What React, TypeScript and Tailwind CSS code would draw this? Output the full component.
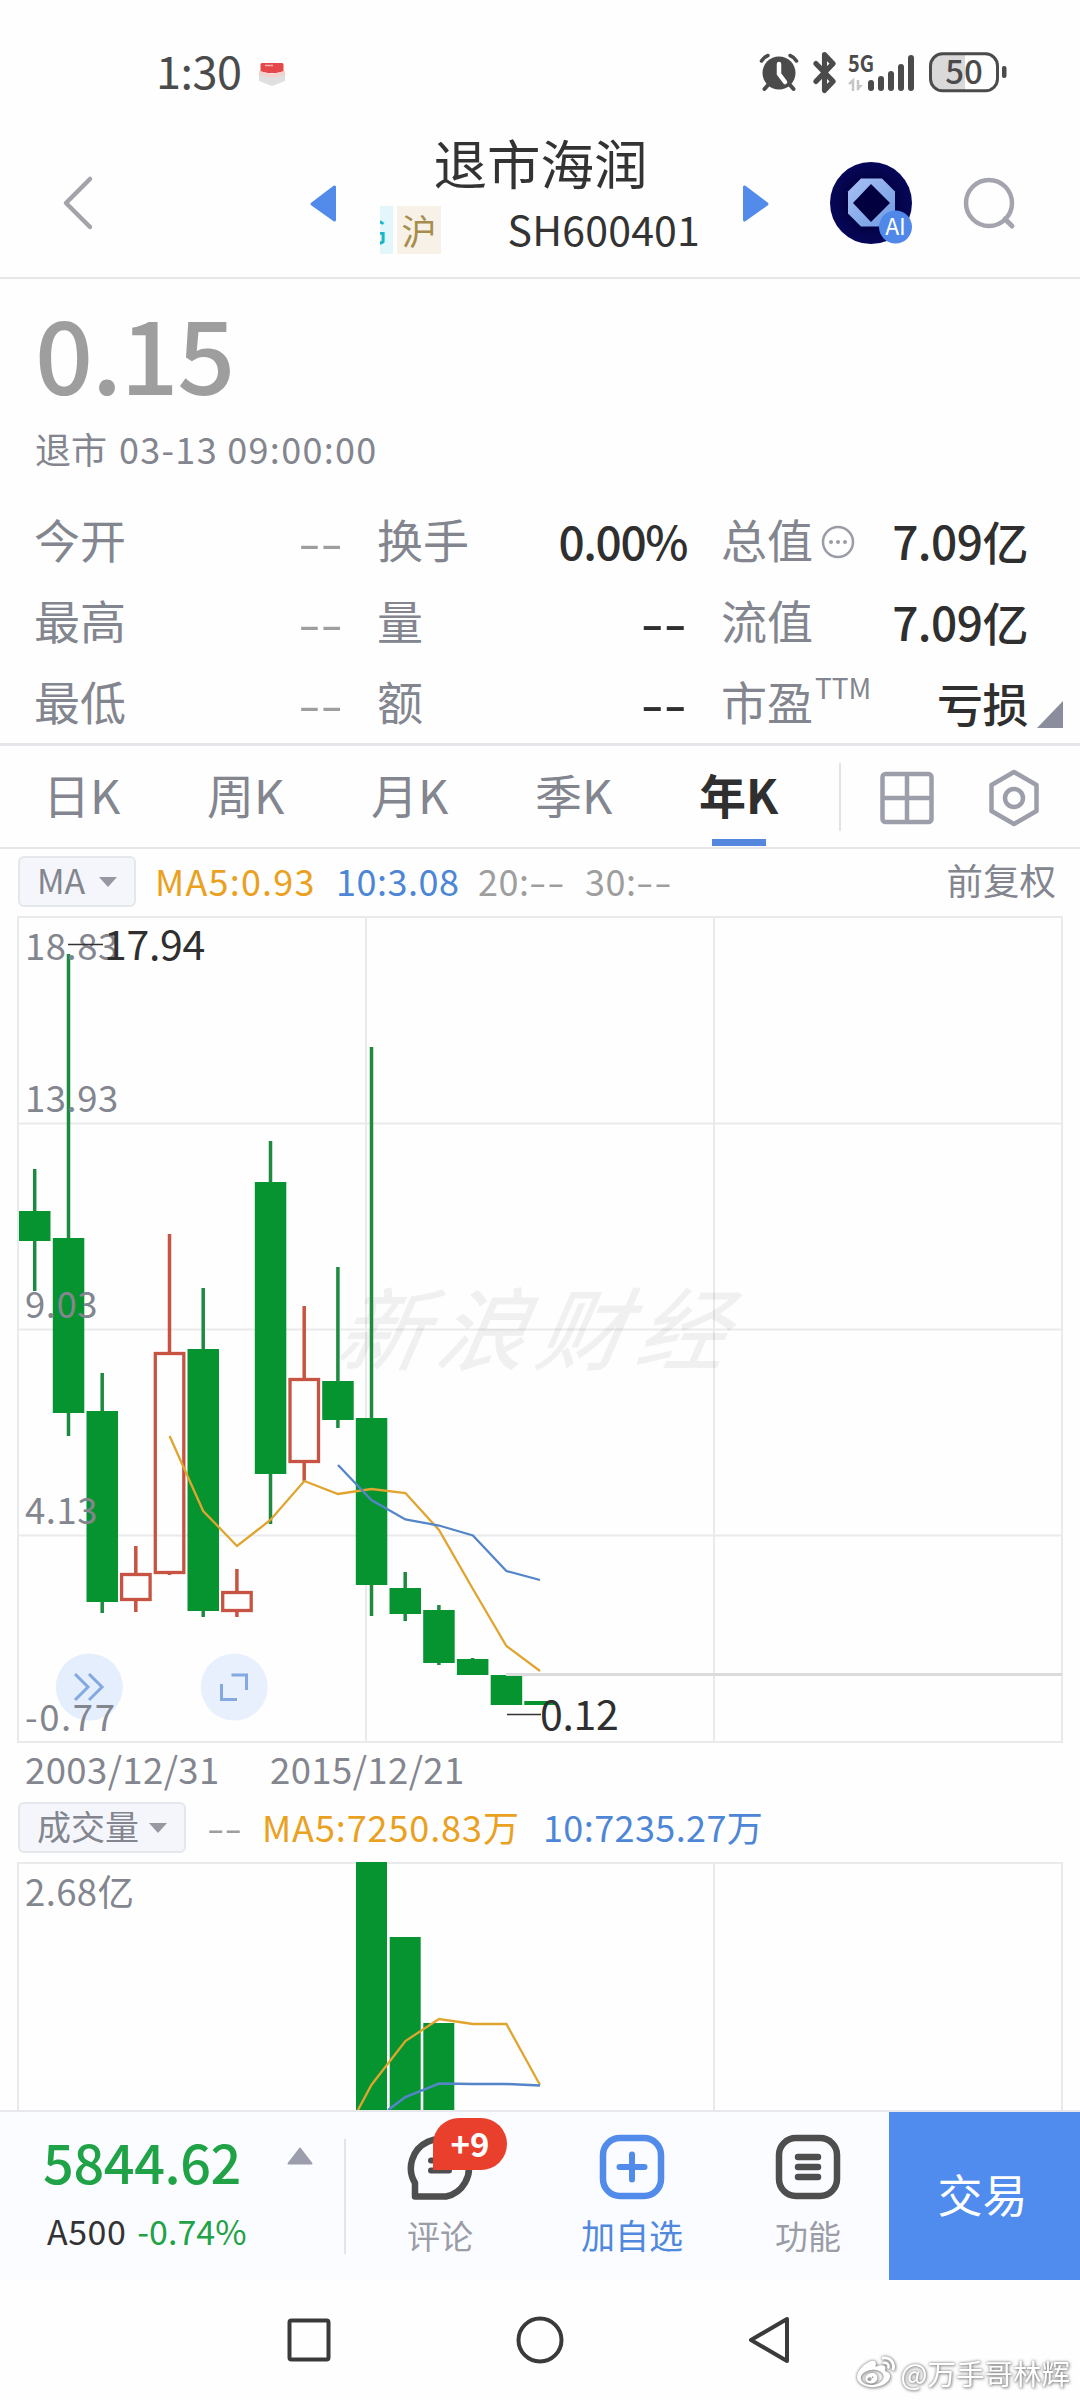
import React from 'react';
import { Bluetooth } from 'lucide-react';
import { FaWeibo } from 'react-icons/fa';

interface Candle {
  x: number;
  high: number;
  top: number;
  bottom: number;
  low: number;
  up?: boolean;
}

type Point = [number, number];

const GREEN = '#069431';
const WICK = '#1d8a40';
const RED = '#c75343';
const ORANGE = '#e0a42f';
const BLUE = '#5485c9';
const GRAY = '#83868f';

// y values are measured from the top edge of the price panel
const candles: Candle[] = [
  { x: 34.7, high: 253, top: 295, bottom: 325, low: 375 },
  { x: 68.5, high: 38, top: 322, bottom: 497, low: 520 },
  { x: 102.2, high: 457, top: 495, bottom: 686, low: 697 },
  { x: 135.8, high: 630, top: 657, bottom: 685, low: 696, up: true },
  { x: 169.5, high: 318, top: 436, bottom: 658, low: 659, up: true },
  { x: 203.2, high: 372, top: 433, bottom: 695, low: 701 },
  { x: 236.9, high: 653, top: 675, bottom: 696, low: 701, up: true },
  { x: 270.5, high: 225, top: 266, bottom: 558, low: 608 },
  { x: 304.2, high: 390, top: 462, bottom: 547, low: 565, up: true },
  { x: 337.9, high: 351, top: 465, bottom: 504, low: 512 },
  { x: 371.5, high: 131, top: 502, bottom: 669, low: 700 },
  { x: 405.2, high: 656, top: 672, bottom: 698, low: 705 },
  { x: 438.9, high: 689, top: 694, bottom: 747, low: 749 },
  { x: 472.6, high: 742, top: 743, bottom: 759, low: 759 },
  { x: 506.4, high: 759, top: 759, bottom: 789, low: 789 },
  { x: 540, high: 785, top: 785, bottom: 789, low: 789 },
];

const priceMa5: Point[] = [
  [169.6, 520], [203.2, 595], [237, 630], [270.4, 604], [304.3, 565], [338, 578],
  [371.4, 573], [405.4, 577], [439, 614], [472.9, 673], [506.4, 730], [540, 755],
];
const priceMa10: Point[] = [
  [338, 549], [371.4, 584], [405.4, 603.5], [439, 609.5], [472.9, 619.5], [506.4, 655], [540, 664],
];

const volumeBars = [
  { x: 356, top: 0 },
  { x: 389.7, top: 75 },
  { x: 423.3, top: 161 },
];
const volumeMa5: Point[] = [[358, 248], [371.4, 223], [405.4, 179], [439, 157], [473, 162], [506.4, 162], [540, 223]];
const volumeMa10: Point[] = [[388, 248], [405.4, 235], [439, 221.5], [473, 222], [506, 222], [540, 223.5]];

const axisLabels = [
  { text: '18.83', y: 44, spacing: 0.5 },
  { text: '13.93', y: 196, spacing: 0.5 },
  { text: '9.03', y: 402, spacing: 0.5 },
  { text: '4.13', y: 608, spacing: 0.5 },
  { text: '-0.77', y: 815, spacing: 1.6 },
];

const toPoints = (points: Point[]) => points.map((p) => p.join(',')).join(' ');

const StatusBar = () => (
  <div className="flex h-[134px] items-start pl-[156px] pr-[71px] pt-[52px] text-[#4b4b4b]">
    <span className="mt-[-6px] text-[45px] leading-[48px] tracking-[-0.5px]">1:30</span>
    <svg width="28" height="28" viewBox="0 0 28 28" className="ml-[17px] mt-[9px]">
      <path d="M4 2h20q1.500 0 1.500 1.500V12h-23V3.500Q2.500 2 4 2z" fill="#e5484b" />
      <path d="M7 4.500h8" stroke="#f7b6b4" strokeWidth="1.500" />
      <path d="M1 10l13 3 13-3v10l-13 5-13-5z" fill="#dfdfdf" />
      <path d="M1 10l13 3 13-3v4l-13 3-13-3z" fill="#f5cfcc" />
    </svg>
    <div className="ml-auto flex items-start">
      <svg width="40" height="40" viewBox="0 0 40 40" fill="none" strokeLinecap="round">
        <circle cx="20" cy="21" r="16.500" fill="#4b4b4b" />
        <path d="M9 33l-3.500 4M31 33l3.500 4" stroke="#4b4b4b" strokeWidth="4" />
        <path d="M2.500 9Q5 5 9 3.500M37.500 9Q35 5 31 3.500" stroke="#4b4b4b" strokeWidth="3.500" />
        <path d="M20 12v10l6 8" stroke="#fff" strokeWidth="4.500" strokeLinejoin="round" />
      </svg>
      <Bluetooth className="ml-[5px] mt-[-1px] h-[43px] w-[41px]" strokeWidth={3} preserveAspectRatio="none" />
      <svg width="76" height="40" viewBox="0 0 76 40" className="ml-[3px]">
        <text x="0" y="20" fontSize="23" fontWeight="700" fill="#4b4b4b" textLength="26" lengthAdjust="spacingAndGlyphs">5G</text>
        <path d="M1 32l4-3.500V39M10 28v10" fill="none" stroke="#c6c6c6" strokeWidth="2.500" />
        <path d="M9 39l6-6h-6z" fill="#c6c6c6" />
        <rect x="20" y="28" width="6" height="11" rx="3" fill="#4b4b4b" />
        <rect x="30" y="24" width="6" height="15" rx="3" fill="#4b4b4b" />
        <rect x="40" y="19" width="6" height="20" rx="3" fill="#4b4b4b" />
        <rect x="50" y="12" width="6" height="27" rx="3" fill="#4b4b4b" />
        <rect x="60" y="3" width="6" height="36" rx="3" fill="#4b4b4b" />
      </svg>
      <svg width="80" height="42" viewBox="0 0 80 42" className="ml-[5px]">
        <path d="M36 3H14Q3 3 3 14v13q0 11 11 11h22z" fill="#d9d9d9" />
        <rect x="1.500" y="1.800" width="67" height="37" rx="12" fill="none" stroke="#4b4b4b" strokeWidth="3" />
        <rect x="73" y="14" width="4.500" height="12" rx="2" fill="#4b4b4b" />
        <text x="35" y="32" fontSize="33" fontWeight="500" textAnchor="middle" fill="#4b4b4b">50</text>
      </svg>
    </div>
  </div>
);

const Header = () => (
  <header className="flex h-[145px] items-start border-b-2 border-[#e6e7e9]">
    <svg width="40" height="60" viewBox="0 0 40 60" className="ml-[58px] mt-[39px]" fill="none">
      <path d="M32 6L8 30l24 24" stroke="#a3a4aa" strokeWidth="4.500" strokeLinecap="round" strokeLinejoin="round" />
    </svg>
    <svg width="28" height="40" viewBox="0 0 28 40" className="ml-[211px] mt-[50px]">
      <path d="M25.500 3v33L3 20z" fill="#528bea" stroke="#528bea" strokeWidth="3" strokeLinejoin="round" />
    </svg>
    <div className="ml-[43px] w-[324px]">
      <div className="mt-[-2px] pr-[3px] text-center text-[53.500px] leading-[60px] text-[#333]">退市海润</div>
      <div className="mt-[12px] flex h-[52px] items-center">
        <div className="flex h-[48px] w-[13px] items-center justify-end overflow-hidden bg-[#e3f7fa] pr-[6px] text-[34px] text-[#1fb4c4]">G</div>
        <div className="ml-[4px] flex h-[48px] w-[44px] items-center justify-center bg-[#f7f1e8] text-[35px] text-[#a68d4c]">沪</div>
        <span className="ml-auto mr-[4px] mt-[-4px] text-[41px] leading-[48px] tracking-[0.2px] text-[#333]">SH600401</span>
      </div>
    </div>
    <svg width="28" height="40" viewBox="0 0 28 40" className="ml-[38px] mt-[50px]">
      <path d="M2.500 3v33L25 20z" fill="#528bea" stroke="#528bea" strokeWidth="3" strokeLinejoin="round" />
    </svg>
    <svg width="86" height="86" viewBox="0 0 86 86" className="ml-[58px] mt-[27px]">
      <defs>
        <linearGradient id="gem" x1="0" y1="0" x2="1" y2="1">
          <stop offset="0" stopColor="#a9c0f5" />
          <stop offset="1" stopColor="#6d9be0" />
        </linearGradient>
        <radialGradient id="orb">
          <stop offset="0.500" stopColor="#02003f" />
          <stop offset="1" stopColor="#07075a" />
        </radialGradient>
      </defs>
      <circle cx="43" cy="42" r="41" fill="url(#orb)" />
      <path d="M33 17.500h21l13 13v22l-13 13H33l-13-13v-22z" fill="url(#gem)" />
      <path d="M43 23l19 19-19 19-18-19z" fill="#02003f" />
      <circle cx="67.500" cy="66" r="16.500" fill="#4f88e8" />
      <text x="67.500" y="74" fontSize="23" textAnchor="middle" fill="#fff">AI</text>
    </svg>
    <svg width="60" height="60" viewBox="0 0 60 60" className="ml-[47px] mt-[40px]" fill="none">
      <circle cx="28" cy="29" r="23" stroke="#a3a4ae" strokeWidth="4.500" />
      <path d="M44 45l7 7" stroke="#a3a4ae" strokeWidth="5" strokeLinecap="round" />
    </svg>
  </header>
);

interface DashesProps {
  origin?: string;
  className?: string;
}

const Dashes = ({ origin = 'origin-right', className = '' }: DashesProps) => (
  <span className={`inline-block scale-x-[1.4] ${origin} ${className}`}>--</span>
);

const Label = ({ children }: { children: React.ReactNode }) => (
  <span className="ml-[-1px] mt-[-4px] flex items-center text-[46px] leading-[66px] text-[#83858f]">{children}</span>
);

const Value = ({ children }: { children: React.ReactNode }) => (
  <span className="text-[46px] font-medium leading-[66px] tracking-[-0.5px] text-[#2f2f2f]">{children}</span>
);

const Quote = () => (
  <section className="relative h-[467px] border-b-[3px] border-[#e5e6ea] pl-[35px] pr-[53px]">
    <div className="pt-[17px] text-[102px] font-medium leading-[110px] tracking-[-1.500px] text-[#9e9e9e]">0.15</div>
    <div className="mt-[20px] flex text-[36px] leading-[44px] text-[#83858f]">
      <span>退市</span>
      <span className="ml-[12px] tracking-[1.300px]">03-13 09:00:00</span>
    </div>
    <div className="mt-[37px] grid grid-cols-[308px_309px_306px] gap-x-[35px] gap-y-[15px]">
      <div className="flex h-[66px] justify-between"><Label>今开</Label><Dashes className="text-[46px] leading-[66px] text-[#9e9e9e]" /></div>
      <div className="flex h-[66px] justify-between">
        <Label>换手</Label>
        <Value><span className="tracking-[-1.400px]">0.00%</span></Value>
      </div>
      <div className="flex h-[66px] justify-between">
        <Label>
          总值
          <svg width="36" height="36" viewBox="0 0 36 36" className="ml-[7px] mt-[7px]" fill="#9b9da6">
            <circle cx="18" cy="18" r="15" fill="none" stroke="#9b9da6" strokeWidth="2.500" />
            <circle cx="11" cy="18" r="2" /><circle cx="18" cy="18" r="2" /><circle cx="25" cy="18" r="2" />
          </svg>
        </Label>
        <Value>7.09亿</Value>
      </div>
      <div className="flex h-[66px] justify-between"><Label>最高</Label><Dashes className="text-[46px] leading-[66px] text-[#9e9e9e]" /></div>
      <div className="flex h-[66px] justify-between"><Label>量</Label><Dashes className="text-[46px] font-medium leading-[66px] text-[#2f2f2f]" /></div>
      <div className="flex h-[66px] justify-between"><Label>流值</Label><Value>7.09亿</Value></div>
      <div className="flex h-[66px] justify-between"><Label>最低</Label><Dashes className="text-[46px] leading-[66px] text-[#9e9e9e]" /></div>
      <div className="flex h-[66px] justify-between"><Label>额</Label><Dashes className="text-[46px] font-medium leading-[66px] text-[#2f2f2f]" /></div>
      <div className="flex h-[66px] justify-between">
        <Label>市盈<span className="ml-[2px] mt-[-26px] text-[28px] leading-[30px]">TTM</span></Label>
        <Value>亏损</Value>
      </div>
    </div>
    <svg width="26" height="27" viewBox="0 0 26 27" className="absolute bottom-[15px] right-[17px]">
      <path d="M26 0v27H0z" fill="#8a8d9b" />
    </svg>
  </section>
);

const tabs = ['日K', '周K', '月K', '季K'];

const PeriodTabs = () => (
  <nav className="flex h-[103px] items-center border-b-2 border-[#e6e7ea] pl-[43px] text-[47px] leading-[60px] text-[#83858f]">
    {tabs.map((tab) => (
      <span key={tab} className="mt-[-5px] w-[164px]">{tab}</span>
    ))}
    <span className="relative mt-[-5px] w-[140px] font-bold text-[#2f2f2f]">
      年K
      <i className="absolute left-[13px] top-[75px] h-[7px] w-[54px] bg-[#5687df]" />
    </span>
    <span className="h-[68px] w-[2px] bg-[#e2e3e6]" />
    <svg width="56" height="54" viewBox="0 0 56 54" className="ml-[38px] mt-[2px]" fill="none" stroke="#9c9eaa" strokeWidth="4.500">
      <rect x="3.500" y="3" width="49" height="48" rx="3" />
      <path d="M28 3v48M3 27h50" />
    </svg>
    <svg width="56" height="60" viewBox="0 0 56 60" className="ml-[51px] mt-[2px]" fill="none" stroke="#9c9eaa" strokeWidth="4.500" strokeLinejoin="round">
      <path d="M28 4l22.500 13v26L28 56 5.500 43V17z" />
      <circle cx="28" cy="30" r="9" />
    </svg>
  </nav>
);

const Picker = ({ width, children }: { width: string; children: React.ReactNode }) => (
  <button className={`flex h-[51px] items-center justify-between rounded-[6px] border-2 border-[#e4e7eb] bg-[#f4f6fb] pl-[17px] pr-[17px] text-[34px] leading-[46px] text-[#83858f] ${width}`}>
    <span className="mt-[-3px]">{children}</span>
    <svg width="18" height="10" viewBox="0 0 18 10">
      <path d="M0 0h18L9 10z" fill="#9698a2" />
    </svg>
  </button>
);

const MaRow = () => (
  <div className="flex h-[67px] items-start pl-[18px] pr-[24px] pt-[7px] text-[36px] leading-[48px]">
    <Picker width="w-[118px]">MA</Picker>
    <span className="ml-[19px] w-[181px] tracking-[1.200px] text-[#e9a11f]">MA5:0.93</span>
    <span className="w-[142px] tracking-[0.5px] text-[#4d86d6]">10:3.08</span>
    <span className="w-[107px] tracking-[0.5px] text-[#9e9e9e]">20:<Dashes origin="origin-left" /></span>
    <span className="tracking-[0.5px] text-[#9e9e9e]">30:<Dashes origin="origin-left" /></span>
    <span className="ml-auto text-[36.500px] text-[#83858f]">前复权</span>
  </div>
);

const PriceChart = () => (
  <svg width="1080" height="828" viewBox="0 0 1080 828" className="block" fill="none">
    <g stroke="#e9eaec" strokeWidth="2">
      <path d="M18 1H1062V826H18z" />
      <path d="M18 207.500H1062M18 413.500H1062M18 619.500H1062M366 1V826M714 1V826" />
    </g>
    <text x="335" y="447" fontSize="89" letterSpacing="11" fill="#000" opacity="0.050" stroke="#000" strokeWidth="1" transform="translate(81 0) skewX(-10.500)" className="italic">新浪财经</text>
    {candles.map((c) => (
      <g key={c.x}>
        <path d={`M${c.x} ${c.high}V${c.top}M${c.x} ${c.bottom}V${c.low}`} stroke={c.up ? RED : WICK} strokeWidth="3.500" />
        {c.up ? (
          <rect x={c.x - 14.200} y={c.top + 1.500} width="28.500" height={c.bottom - c.top - 3} stroke={RED} strokeWidth="3.300" />
        ) : (
          <rect x={c.x - 15.700} y={c.top} width="31.500" height={c.bottom - c.top} fill={GREEN} />
        )}
      </g>
    ))}
    <path d="M506 758.500H1062" stroke="#dadbdd" strokeWidth="3" />
    <polyline points={toPoints(priceMa5)} stroke={ORANGE} strokeWidth="2.300" />
    <polyline points={toPoints(priceMa10)} stroke={BLUE} strokeWidth="2.300" />
    <circle cx="89.300" cy="771" r="33.500" fill="#e5eefd" />
    <circle cx="234.300" cy="771" r="33.500" fill="#e9f0fd" />
    <g stroke="#83a8e2" strokeWidth="3">
      <path d="M75 758l13 13-13 13M89 758l13 13-13 13" />
      <path d="M231.500 759h15v15M221.500 768v15.500h15.500" />
    </g>
    {axisLabels.map((label) => (
      <text key={label.text} x="25" y={label.y} fontSize="36.500" letterSpacing={label.spacing} fill={GRAY}>{label.text}</text>
    ))}
    <path d="M68 28.500H103M507 798.500H541" stroke="#333" strokeWidth="1.500" />
    <text x="104" y="44" fontSize="41" fill="#2f2f2f" letterSpacing="-0.300">17.94</text>
    <text x="540" y="814" fontSize="41" fill="#2f2f2f" letterSpacing="-0.300">0.12</text>
  </svg>
);

const VolumeRow = () => (
  <div className="flex h-[60px] items-start pl-[18px] text-[36px] leading-[48px]">
    <Picker width="w-[168px]">成交量</Picker>
    <Dashes className="ml-[31px] text-[#9e9e9e]" />
    <span className="ml-[20px] w-[281px] tracking-[0.9px] text-[#e9a11f]">MA5:7250.83万</span>
    <span className="tracking-[0.4px] text-[#4d86d6]">10:7235.27万</span>
  </div>
);

const VolumeChart = () => (
  <svg width="1080" height="248" viewBox="0 0 1080 248" className="block" fill="none">
    <path d="M18 248V1H1062V248M714 1V248" stroke="#e9eaec" strokeWidth="2" />
    {volumeBars.map((bar) => (
      <rect key={bar.x} x={bar.x} y={bar.top} width="31" height={248 - bar.top} fill={GREEN} />
    ))}
    <polyline points={toPoints(volumeMa5)} stroke={ORANGE} strokeWidth="2.300" />
    <polyline points={toPoints(volumeMa10)} stroke={BLUE} strokeWidth="2.500" />
    <text x="25" y="44" fontSize="36.500" letterSpacing="0.400" fill={GRAY}>2.68亿</text>
  </svg>
);

const BottomBar = () => (
  <footer className="flex h-[170px] border-t-2 border-[#e6e8ec] bg-[#fbfcff]">
    <div className="w-[244px] pl-[43px] pt-[14px]">
      <div className="text-[54px] font-medium leading-[70px] tracking-[-0.400px] text-[#1fa346]">5844.62</div>
      <div className="ml-[4px] mt-[12px] whitespace-nowrap text-[34px] leading-[46px] text-[#1fa346]">
        <span className="mr-[11px] tracking-[0.500px] text-[#333]">A500</span>-0.74%
      </div>
    </div>
    <svg width="26" height="18" viewBox="0 0 26 18" className="ml-[43px] mt-[35px]">
      <path d="M13 1.500L24.500 16.500H1.500z" fill="#9c9eae" stroke="#9c9eae" strokeWidth="2" strokeLinejoin="round" />
    </svg>
    <span className="ml-[31px] mt-[27px] h-[115px] w-[2px] bg-[#e3e4e9]" />
    <div className="relative ml-[42px] flex w-[104px] flex-col items-center pt-[20px] text-[33px] leading-[44px] text-[#9a9ca6]">
      <svg width="70" height="70" viewBox="0 0 70 70" className="ml-[2px]" fill="none" stroke="#4e4e4e">
        <path d="M9 64.500V51A29 29 0 1 1 40 64.500z" strokeWidth="6.500" strokeLinejoin="round" />
        <path d="M25 28.500h12M25 38.500h18" strokeWidth="6" strokeLinecap="round" />
      </svg>
      <span className="absolute left-[45px] top-[6px] flex h-[52px] w-[74px] items-center justify-center rounded-[26px] rounded-bl-none bg-[#e8402c] pb-[3px] text-[33px] font-bold text-white">+9</span>
      <span className="mt-[11px]">评论</span>
    </div>
    <div className="ml-[88px] flex w-[104px] flex-col items-center pt-[20px] text-[34px] leading-[44px] text-[#4f88dd]">
      <svg width="70" height="70" viewBox="0 0 70 70" fill="none" stroke="#528bea">
        <rect x="6" y="6" width="58" height="58" rx="17" strokeWidth="6.500" />
        <path d="M35 22.500v25M22.500 35h25" strokeWidth="6" strokeLinecap="round" />
      </svg>
      <span className="mt-[11px] whitespace-nowrap">加自选</span>
    </div>
    <div className="ml-[72px] flex w-[104px] flex-col items-center pt-[20px] text-[33px] leading-[44px] text-[#9a9ca6]">
      <svg width="70" height="70" viewBox="0 0 70 70" fill="none" stroke="#4e4e4e">
        <rect x="6" y="6" width="58" height="58" rx="17" strokeWidth="6.500" />
        <path d="M25 25h20M25 35h20M25 45h20" strokeWidth="6.500" strokeLinecap="round" />
      </svg>
      <span className="mt-[11px]">功能</span>
    </div>
    <button className="ml-auto w-[191px] bg-[#508bee] pb-[4px] pr-[4px] text-[45px] text-white">交易</button>
  </footer>
);

const SystemNav = () => (
  <div className="relative flex h-[120px] items-start pl-[284px] pt-[34px]">
    <svg width="50" height="52" viewBox="0 0 50 52" fill="none" stroke="#3a3a3a" strokeWidth="4">
      <rect x="5.500" y="6.500" width="39" height="39" rx="2" />
    </svg>
    <svg width="52" height="52" viewBox="0 0 52 52" className="ml-[180px]" fill="none" stroke="#3a3a3a" strokeWidth="4">
      <circle cx="26" cy="26" r="21.500" />
    </svg>
    <svg width="50" height="52" viewBox="0 0 50 52" className="ml-[178px]" fill="none" stroke="#3a3a3a" strokeWidth="4" strokeLinejoin="round">
      <path d="M43 5v42L7 26z" />
    </svg>
    <div className="absolute bottom-[7px] right-[10px] flex items-center text-[28.500px] leading-[40px] text-white [filter:drop-shadow(0_0_1.500px_#777)_drop-shadow(1px_1px_1px_#bbb)]">
      <FaWeibo className="mr-[6px] h-[38px] w-[38px]" />
      @万手哥林辉
    </div>
  </div>
);

export default function App() {
  return (
    <div className="h-[2400px] w-[1080px] overflow-hidden bg-[#fefefe] font-['Noto_Sans_CJK_SC',sans-serif]">
      <StatusBar />
      <Header />
      <Quote />
      <PeriodTabs />
      <MaRow />
      <div className="h-[828px]"><PriceChart /></div>
      <div className="flex h-[58px] pl-[25px] pt-[2px] text-[36.500px] leading-[46px] tracking-[0.400px] text-[#83868f]">
        <span className="w-[245px]">2003/12/31</span>
        <span>2015/12/21</span>
      </div>
      <VolumeRow />
      <VolumeChart />
      <BottomBar />
      <SystemNav />
    </div>
  );
}
